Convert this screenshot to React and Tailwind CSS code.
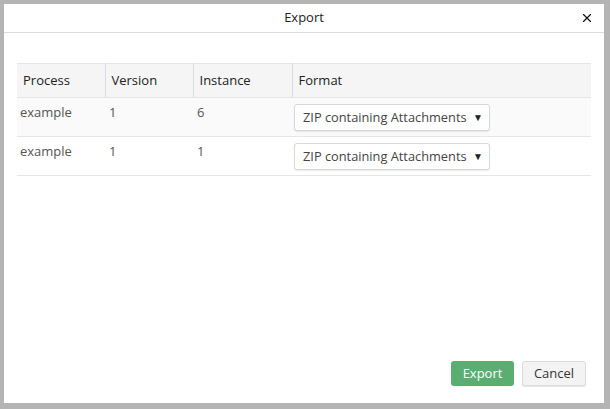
import { X } from 'lucide-react';

const rows = [
  { process: 'example', version: '1', instance: '6' },
  { process: 'example', version: '1', instance: '1' },
];

function FormatSelect() {
  return (
    <div className="flex h-[27px] w-[196px] items-center justify-between rounded-[3px] border border-[#d9d9d9] bg-white pl-[8px] pr-[6px] text-[12.8px] text-[#444] shadow-[0_1px_1px_rgba(0,0,0,0.08)]">
      <span>ZIP containing Attachments</span>
      <span className="pb-[2px] text-[10px] leading-none text-[#222]">▼</span>
    </div>
  );
}

export default function App() {
  return (
    <div
      className="h-[409px] w-[610px] bg-[#b4b4b4] pt-[4px] pl-[4px] text-[13px] text-[#555]"
      style={{ fontFamily: '"Open Sans", "Liberation Sans", sans-serif' }}
    >
      <div className="flex h-[399px] w-[600px] flex-col bg-white">
        <div className="relative flex h-[29px] items-center justify-center border-b border-[#dcdcdc]">
          <span className="text-[13px] text-[#222]">Export</span>
          <button className="absolute right-[10px] top-[7px] text-[#111]">
            <X size={14} strokeWidth={2} />
          </button>
        </div>

        <div className="flex-1 px-[13px] pt-[30px]">
          <table className="w-full border-collapse">
            <thead>
              <tr className="h-[34px] border-y border-[#e6e6e6] bg-[#f5f5f5] text-left">
                <th className="w-[88px] border-r border-[#dcdcdc] px-[6px] font-normal text-[#222]">Process</th>
                <th className="w-[88px] border-r border-[#dcdcdc] px-[6px] font-normal text-[#222]">Version</th>
                <th className="w-[99px] border-r border-[#dcdcdc] px-[6px] font-normal text-[#222]">Instance</th>
                <th className="px-[6px] font-normal text-[#222]">Format</th>
              </tr>
            </thead>
            <tbody>
              {rows.map((row, i) => (
                <tr key={i} className={`h-[39px] border-b border-[#e6e6e6] align-top ${i === 0 ? 'bg-[#fafafa]' : 'bg-white'}`}>
                  <td className="px-[3px] pt-[5px]">{row.process}</td>
                  <td className="px-[4px] pt-[5px]">{row.version}</td>
                  <td className="px-[4px] pt-[5px]">{row.instance}</td>
                  <td className="px-[2px] pt-[6px]">
                    <FormatSelect />
                  </td>
                </tr>
              ))}
            </tbody>
          </table>
        </div>

        <div className="flex justify-end gap-[8px] pr-[18px] pb-[17px]">
          <button className="h-[25px] w-[63px] rounded-[3px] bg-[#5cad72] text-[13px] text-white">Export</button>
          <button className="h-[25px] w-[64px] rounded-[3px] border border-[#dcdcdc] bg-[#f3f3f3] text-[13px] text-[#333] shadow-[0_1px_1px_rgba(0,0,0,0.1)]">
            Cancel
          </button>
        </div>
      </div>
    </div>
  );
}
